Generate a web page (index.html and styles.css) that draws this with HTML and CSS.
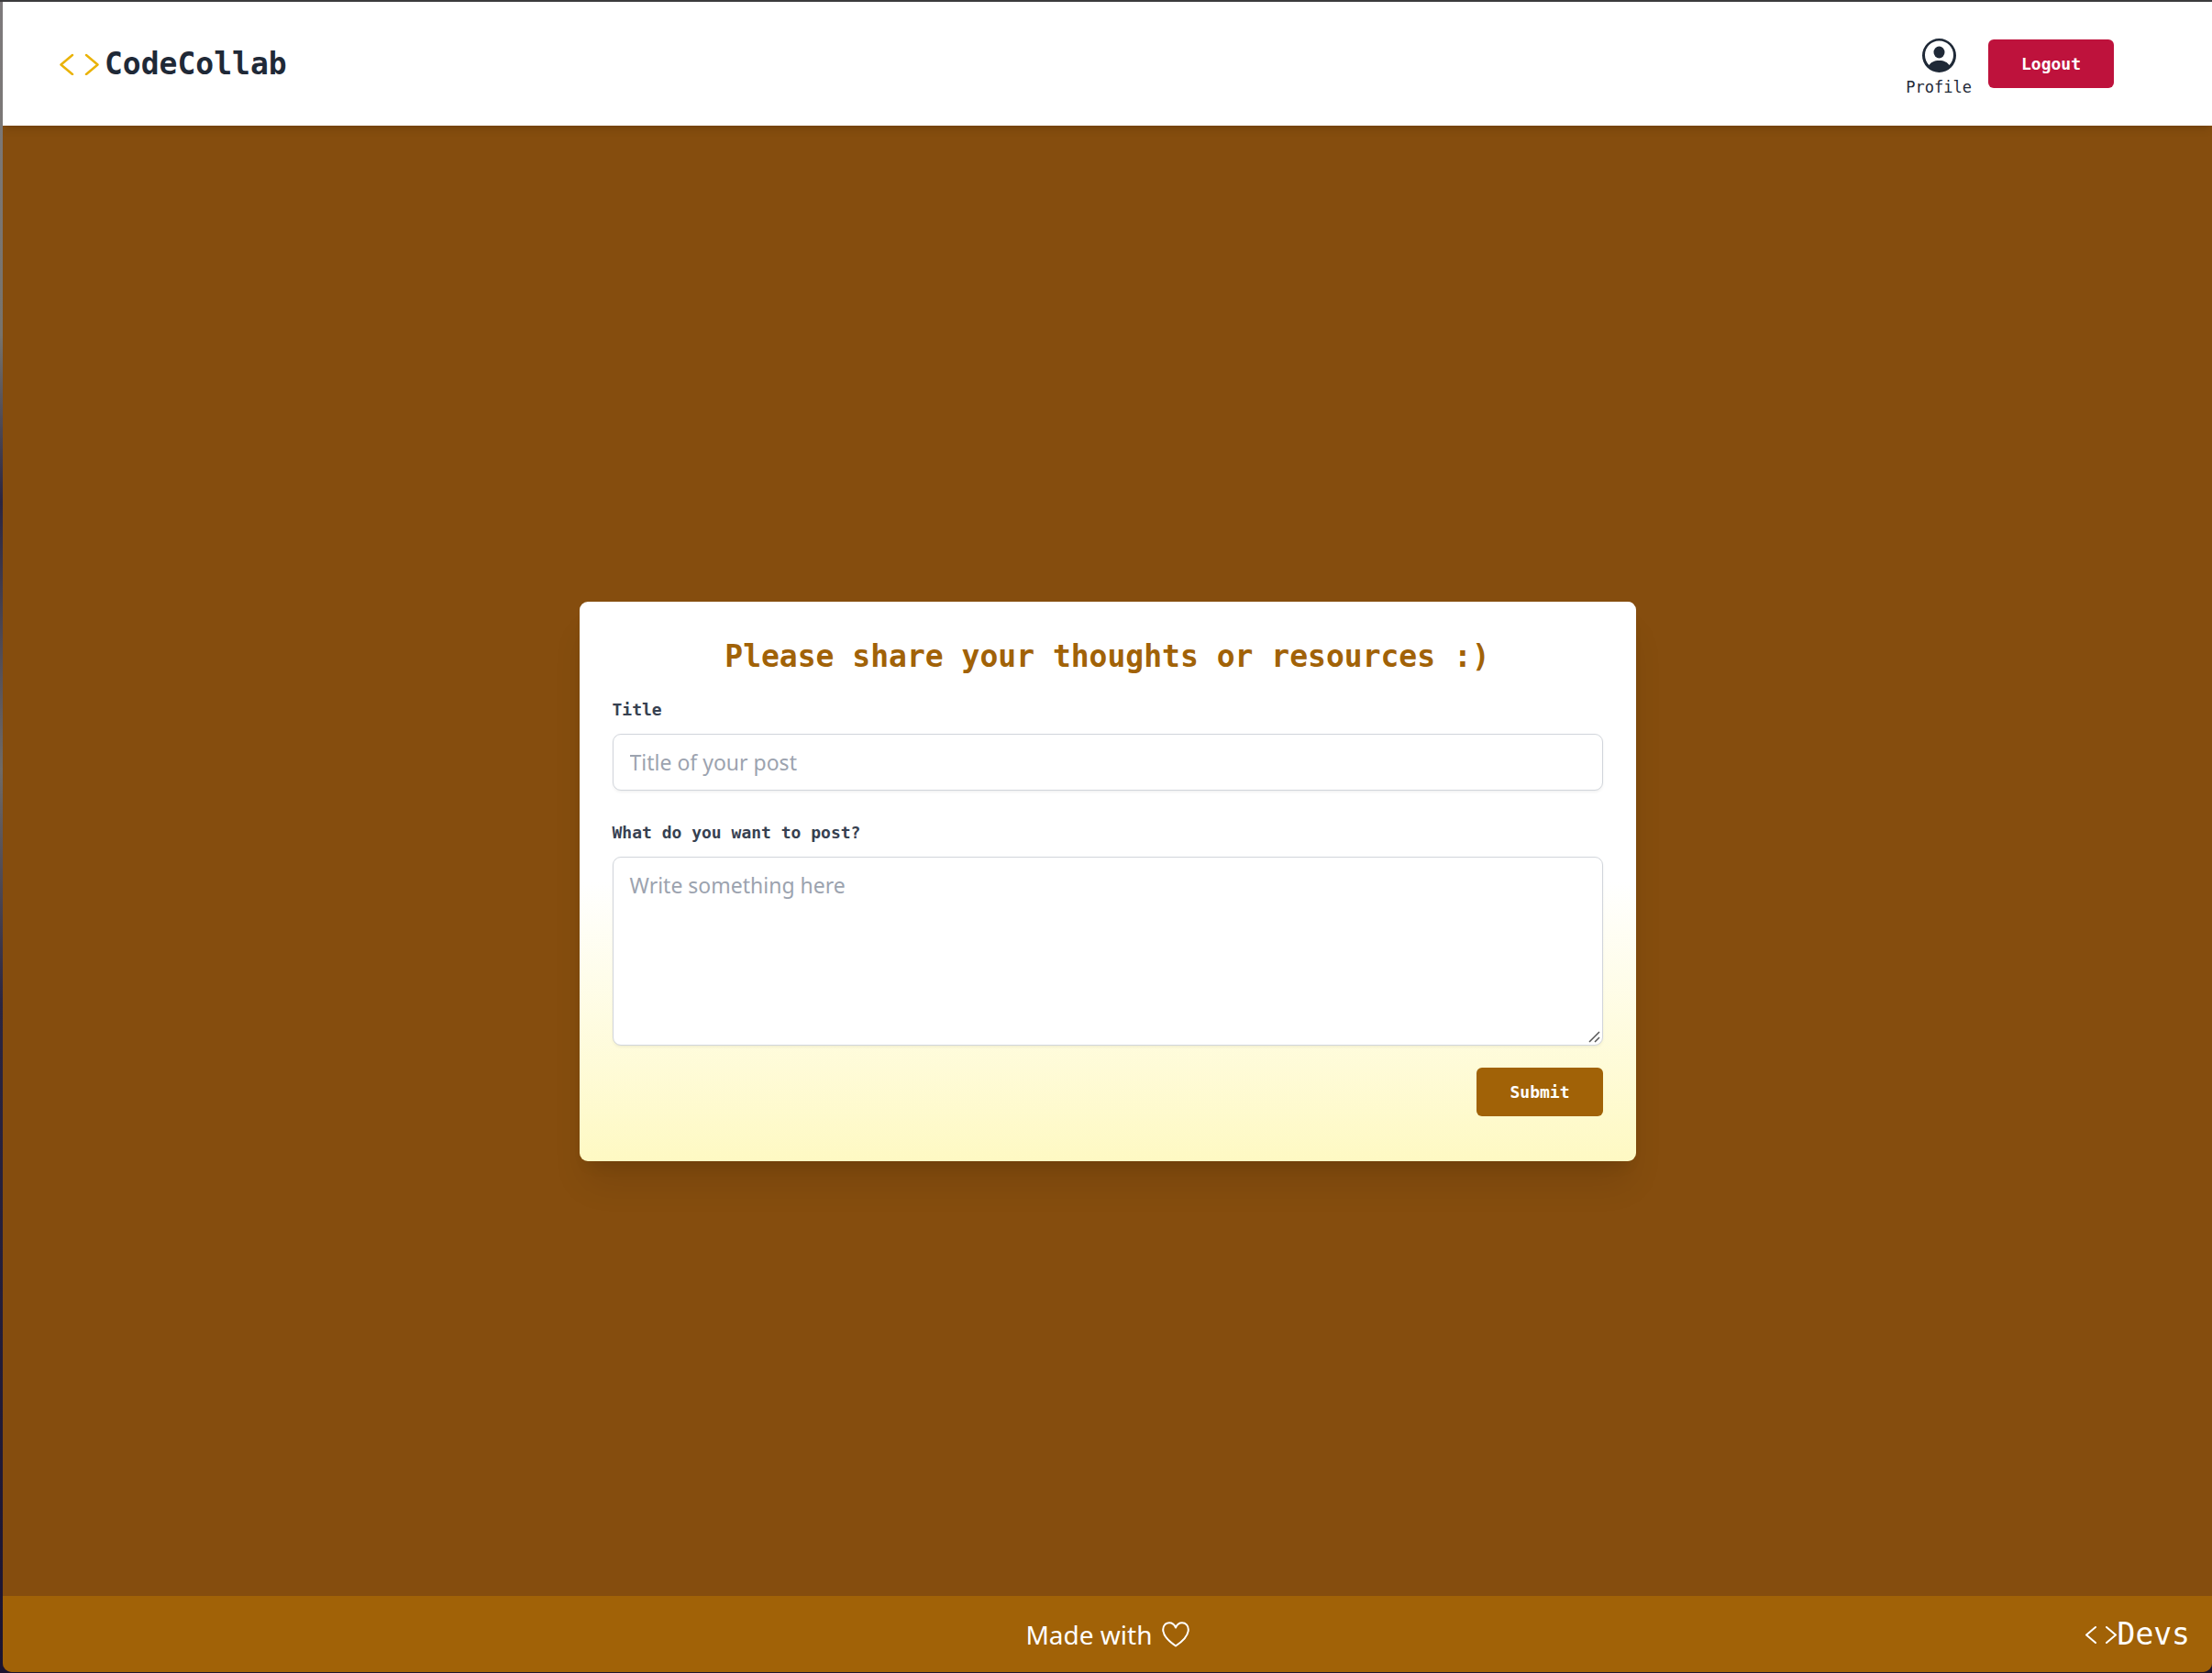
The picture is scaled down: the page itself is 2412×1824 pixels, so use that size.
FILE: index.html
```html
<!DOCTYPE html>
<html lang="en">
<head>
<meta charset="utf-8">
<meta name="viewport" content="width=device-width, initial-scale=1">
<title>CodeCollab</title>
<link rel="stylesheet" href="styles.css">
</head>
<body>
<div class="app">
  <header class="header">
    <a class="brand" href="#">
      <svg class="brand-icon" viewBox="0 0 44 24" aria-hidden="true"><path d="M15 2 2.500 12.500 15 23M30 2l12.500 10.500L30 23"/></svg>
      <span>CodeCollab</span>
    </a>
    <nav class="actions">
      <a class="profile" href="#">
        <svg class="profile-icon" viewBox="0 0 37 37" aria-hidden="true">
          <path fill-rule="evenodd" d="M18.500 0a18.500 18.500 0 1 1 0 37a18.500 18.500 0 0 1 0-37zM7.500 29C9.500 26 13 24 18.500 24S27.500 26 29.500 29A15.500 15.500 0 1 0 7.500 29z"/>
          <ellipse cx="18.500" cy="15" rx="6" ry="6.500"/>
        </svg>
        <span>Profile</span>
      </a>
      <button class="button button-logout" type="button">Logout</button>
    </nav>
  </header>
  <main class="main">
    <form class="card">
      <h1 class="card-title">Please share your thoughts or resources :)</h1>
      <div class="field">
        <label for="title">Title</label>
        <input id="title" type="text" placeholder="Title of your post">
      </div>
      <div class="field">
        <label for="body">What do you want to post?</label>
        <textarea id="body" placeholder="Write something here"></textarea>
      </div>
      <button class="button button-submit" type="submit">Submit</button>
    </form>
  </main>
  <footer class="footer">
    <p class="made">Made with
      <svg class="heart" viewBox="0 0 30 28" role="img" aria-label="love"><path d="M15 6.500C13.500 3 10.800 1.300 8 1.300C4 1.300 1.200 4.500 1.200 8.500C1.200 16 9 22.500 15 26.500C21 22.500 28.800 16 28.800 8.500C28.800 4.500 26 1.300 22 1.300C19.200 1.300 16.500 3 15 6.500z"/></svg>
    </p>
    <p class="devs">
      <svg class="devs-icon" viewBox="0 0 36 20" aria-hidden="true"><path d="M12 2 2 10.500l10 8.500M24 2l10 8.500L24 19"/></svg>
      <span>Devs</span>
    </p>
  </footer>
</div>
</body>
</html>
```
FILE: styles.css
```css
:root {
  --mono: "DejaVu Sans Mono", monospace;
  --sans: "Noto Sans", sans-serif;
  --ink: #1f2937;
  --amber: #a16207;
  --brown: #854d0e;
}

* {
  box-sizing: border-box;
  margin: 0;
}

body {
  min-height: 100vh;
  display: flex;
  padding: 2px 0 1px 3px;
  background:
    linear-gradient(#3b3b3d, #3b3b3d) top / 100% 2px no-repeat,
    linear-gradient(#7d7a7c, #77736c 20%, #2b2540 30%, #6f6a66 46%, #2b2540 60%, #1c1430);
  font-family: var(--mono);
}

.app {
  flex: 1;
  display: flex;
  flex-direction: column;
  overflow: hidden;
  border-radius: 0 0 10px 10px;
  background: var(--brown);
}

.header {
  display: flex;
  align-items: center;
  justify-content: space-between;
  min-height: 135px;
  padding: 0 107px 0 61px;
  background: #fff;
  box-shadow: 0 6px 9px -2px rgba(0, 0, 0, .1), 0 3px 6px -3px rgba(0, 0, 0, .1);
}

.brand {
  display: flex;
  align-items: center;
  gap: 6px;
  color: var(--ink);
  font-size: 33px;
  font-weight: 700;
  line-height: 48px;
  text-decoration: none;
}

.brand-icon {
  width: 44px;
  height: 24px;
  fill: none;
  stroke: #eab308;
  stroke-width: 2.5;
  stroke-linecap: round;
  stroke-linejoin: round;
}

.actions {
  display: flex;
  align-items: center;
  gap: 18px;
}

.profile {
  display: flex;
  flex-direction: column;
  align-items: center;
  gap: 4px;
  padding-top: 10px;
  color: var(--ink);
  font-size: 17px;
  line-height: 24px;
  text-decoration: none;
}

.profile-icon {
  width: 37px;
  height: 37px;
  fill: currentColor;
}

.button {
  padding: 0 36px;
  border: 0;
  border-radius: 6px;
  color: #fff;
  font: 700 18px/53px var(--mono);
  cursor: pointer;
}

.button-logout {
  background: #be123c;
}

.button-submit {
  align-self: flex-end;
  background: var(--amber);
}

.main {
  flex: 1;
  display: flex;
  align-items: center;
  justify-content: center;
  padding: 45px 24px 0;
}

.card {
  display: flex;
  flex-direction: column;
  width: 100%;
  max-width: 1152px;
  padding: 36px 36px 49px;
  border-radius: 9px;
  background: linear-gradient(#fff, #fff 50%, #fef9c3);
  box-shadow: 0 30px 38px -8px rgba(0, 0, 0, .1), 0 12px 15px -9px rgba(0, 0, 0, .1);
}

.card-title {
  margin-bottom: 22px;
  color: var(--amber);
  font-size: 33px;
  line-height: 48px;
  text-align: center;
}

.field {
  display: flex;
  flex-direction: column;
  gap: 14px;
  margin-bottom: 34px;
}

.field:has(textarea) {
  margin-bottom: 24px;
}

label {
  color: #374151;
  font-size: 18px;
  font-weight: 700;
  line-height: 24px;
}

input,
textarea {
  width: 100%;
  padding: 12px 18px;
  border: 1px solid #d1d5db;
  border-radius: 9px;
  background: #fff;
  box-shadow: 0 2px 3px rgba(0, 0, 0, .05);
  color: var(--ink);
  font: 23px/36px var(--sans);
}

input {
  height: 62px;
}

textarea {
  display: block;
  height: 206px;
  resize: vertical;
}

textarea::-webkit-resizer {
  background: url("data:image/svg+xml,%3Csvg xmlns='http://www.w3.org/2000/svg' width='15' height='15'%3E%3Cpath d='M1 12 12 1M7 12l5-5' stroke='%23555' stroke-width='1.500'/%3E%3C/svg%3E") no-repeat;
}

::placeholder {
  color: #9ca3af;
}

.footer {
  display: grid;
  grid-template-columns: 1fr auto 1fr;
  align-items: center;
  min-height: 83px;
  padding: 0 24px;
  background: var(--amber);
  color: #fff;
}

.made {
  grid-column: 2;
  display: flex;
  align-items: center;
  gap: 10px;
  font: 28px/42px var(--sans);
}

.heart {
  width: 30px;
  height: 28px;
  fill: none;
  stroke: currentColor;
  stroke-width: 2;
  stroke-linejoin: round;
}

.devs {
  display: flex;
  align-items: center;
  justify-self: end;
  font-size: 33px;
  line-height: 48px;
}

.devs-icon {
  width: 36px;
  height: 20px;
  fill: none;
  stroke: currentColor;
  stroke-width: 2;
  stroke-linecap: round;
  stroke-linejoin: round;
}
```
